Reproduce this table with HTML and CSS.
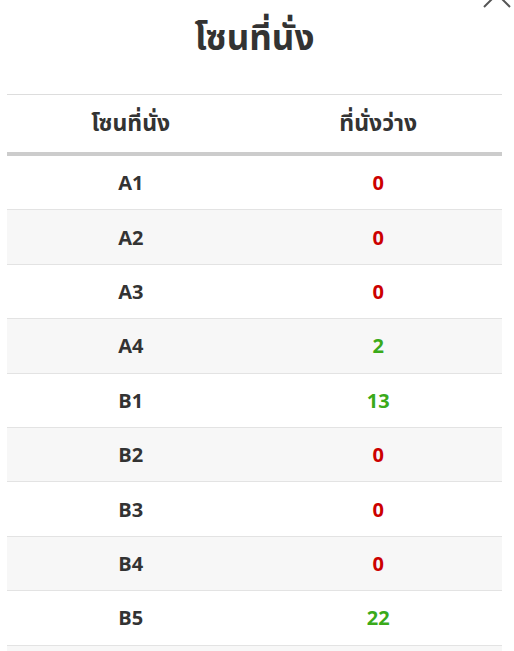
FILE: index.html
```html
<!DOCTYPE html>
<html lang="th">
<head>
<meta charset="utf-8">
<link rel="stylesheet" href="styles.css">
</head>
<body>
<div class="modal">
  <button class="close" aria-label="close">
    <svg width="30" height="30" viewBox="0 0 30 30"><path d="M2 2 L28 28 M28 2 L2 28" stroke="#555" stroke-width="2" fill="none"/></svg>
  </button>
  <h1 class="title">โซนที่นั่ง</h1>
  <table class="zones">
    <thead>
      <tr><th>โซนที่นั่ง</th><th>ที่นั่งว่าง</th></tr>
    </thead>
    <tbody>
      <tr><td>A1</td><td class="none">0</td></tr>
      <tr><td>A2</td><td class="none">0</td></tr>
      <tr><td>A3</td><td class="none">0</td></tr>
      <tr><td>A4</td><td class="avail">2</td></tr>
      <tr><td>B1</td><td class="avail">13</td></tr>
      <tr><td>B2</td><td class="none">0</td></tr>
      <tr><td>B3</td><td class="none">0</td></tr>
      <tr><td>B4</td><td class="none">0</td></tr>
      <tr><td>B5</td><td class="avail">22</td></tr>
      <tr><td></td><td></td></tr>
    </tbody>
  </table>
</div>
</body>
</html>
```
FILE: styles.css
```css
html, body {
  margin: 0;
  padding: 0;
  background: #fff;
  font-family: "Open Sans", "Noto Sans", "Noto Sans Thai", sans-serif;
  color: #333;
  overflow: hidden;
}
.modal {
  position: relative;
  width: 495px;
  margin-left: 7px;
}
.close {
  position: absolute;
  top: -21px;
  right: -10px;
  width: 30px;
  height: 30px;
  padding: 0;
  border: 0;
  background: none;
}
.close svg { display: block; }
.title {
  margin: 0;
  padding-top: 12px;
  height: 94px;
  box-sizing: border-box;
  text-align: center;
  font-size: 35px;
  font-weight: 700;
  line-height: 50px;
  color: #333;
}
.zones {
  width: 100%;
  border-collapse: collapse;
  table-layout: fixed;
}
.zones th {
  height: 57px;
  padding: 0;
  border-top: 1px solid #ddd;
  border-bottom: 4px solid #ccc;
  font-size: 23px;
  font-weight: 700;
  text-align: center;
  vertical-align: middle;
}
.zones td {
  height: 53.4px;
  padding: 0;
  border-bottom: 1px solid #e3e3e3;
  font-size: 20px;
  font-weight: 700;
  text-align: center;
  vertical-align: middle;
}
.zones tbody tr:nth-child(even) td { background: #f7f7f7; }
.zones td.none { color: #cc0000; }
.zones td.avail { color: #3aaa1a; }
```
